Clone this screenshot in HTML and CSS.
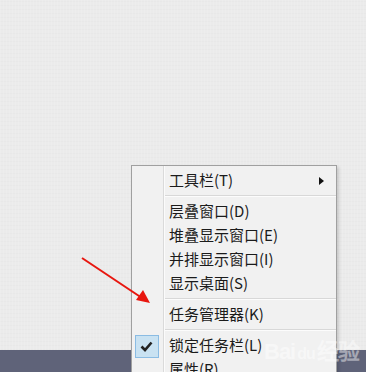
FILE: index.html
```html
<!DOCTYPE html>
<html lang="zh-CN">
<head>
    <meta charset="UTF-8">
    <meta name="viewport" content="width=device-width, initial-scale=1.0">
    <title>任务栏菜单</title>
    <link rel="stylesheet" href="styles.css">
</head>
<body>
    <div class="desktop"></div>
    <div class="taskbar"></div>

    <div class="menu">
        <div class="item">
            <span class="icon"></span>
            <span class="label">工具栏(T)</span>
            <span class="sub"></span>
        </div>
        <div class="sep"></div>
        <div class="item"><span class="icon"></span><span class="label">层叠窗口(D)</span></div>
        <div class="item"><span class="icon"></span><span class="label">堆叠显示窗口(E)</span></div>
        <div class="item"><span class="icon"></span><span class="label">并排显示窗口(I)</span></div>
        <div class="item"><span class="icon"></span><span class="label">显示桌面(S)</span></div>
        <div class="sep"></div>
        <div class="item"><span class="icon"></span><span class="label">任务管理器(K)</span></div>
        <div class="sep"></div>
        <div class="item">
            <span class="icon">
                <span class="check">
                    <svg width="13" height="11" viewBox="0 0 13 11">
                        <path d="M1.5 5.5 L5 9 L11.5 1.5" fill="none" stroke="#222" stroke-width="2.6"/>
                    </svg>
                </span>
            </span>
            <span class="label">锁定任务栏(L)</span>
        </div>
        <div class="item"><span class="icon"></span><span class="label">属性(R)</span></div>
    </div>

    <!-- red pointer arrow, drawn over the menu edge -->
    <svg class="pointer" width="90" height="60" viewBox="0 0 90 60">
        <line x1="12" y1="8" x2="72" y2="48" stroke="#e8160f" stroke-width="2"/>
        <polygon points="80,53 66,50 73,40" fill="#e8160f"/>
    </svg>

    <div class="watermark">Bai<span class="paw">du</span>经验</div>
</body>
</html>
```

FILE: styles.css
```css
*{
    margin: 0;
    padding: 0;
    box-sizing: border-box;
}

body{
    width: 366px;
    height: 372px;
    overflow: hidden;
    position: relative;
    background: #ebebeb;
    font-family: "Noto Sans CJK SC", "Microsoft YaHei", sans-serif;
}

.desktop{
    height: 350px;
    background:
        repeating-linear-gradient(90deg, rgba(255,255,255,0.12) 0 1px, transparent 1px 3px),
        repeating-linear-gradient(0deg, rgba(0,0,0,0.012) 0 1px, transparent 1px 4px),
        #ebebeb;
}

.taskbar{
    height: 22px;
    background: #5f6379;
}

.pointer{
    position: absolute;
    left: 70px;
    top: 250px;
}

.menu{
    position: absolute;
    left: 131px;
    top: 165px;
    width: 206px;
    padding-top: 3px;
    background: #f1f1f1;
    border: 1px solid #a0a0a0;
    border-bottom: none;
    box-shadow: 2px 2px 3px rgba(0,0,0,0.15);
}

.menu::before{
    content: "";
    position: absolute;
    left: 31px;
    top: 0;
    bottom: 0;
    border-left: 1px solid #dadada;
    border-right: 1px solid #fbfbfb;
}

.item{
    display: flex;
    align-items: center;
    height: 24px;
    line-height: 24px;
    font-size: 15px;
    color: #1b1b1b;
}

.icon{
    width: 37px;
    flex: none;
    display: flex;
    justify-content: center;
}

.label{
    flex: 1;
    margin-top: -2px;
}

.sub{
    width: 0;
    height: 0;
    margin-right: 12px;
    border-top: 4px solid transparent;
    border-bottom: 4px solid transparent;
    border-left: 5px solid #111;
}

.check{
    display: flex;
    align-items: center;
    justify-content: center;
    width: 24px;
    height: 23px;
    margin-left: -8px;
    background: #c9e2f2;
    border: 1px solid #8bbce3;
}

.sep{
    height: 1px;
    margin: 2px 0 4px 32px;
    border-top: 1px solid #d8d8d8;
    box-shadow: 0 1px 0 #fcfcfc;
}

.watermark{
    position: absolute;
    left: 264px;
    top: 333px;
    font-family: "Liberation Sans", sans-serif;
    font-size: 22px;
    font-weight: bold;
    color: rgba(255,255,255,0.45);
    letter-spacing: -1px;
}

.paw{
    font-size: 16px;
    margin: 0 2px;
}
```
